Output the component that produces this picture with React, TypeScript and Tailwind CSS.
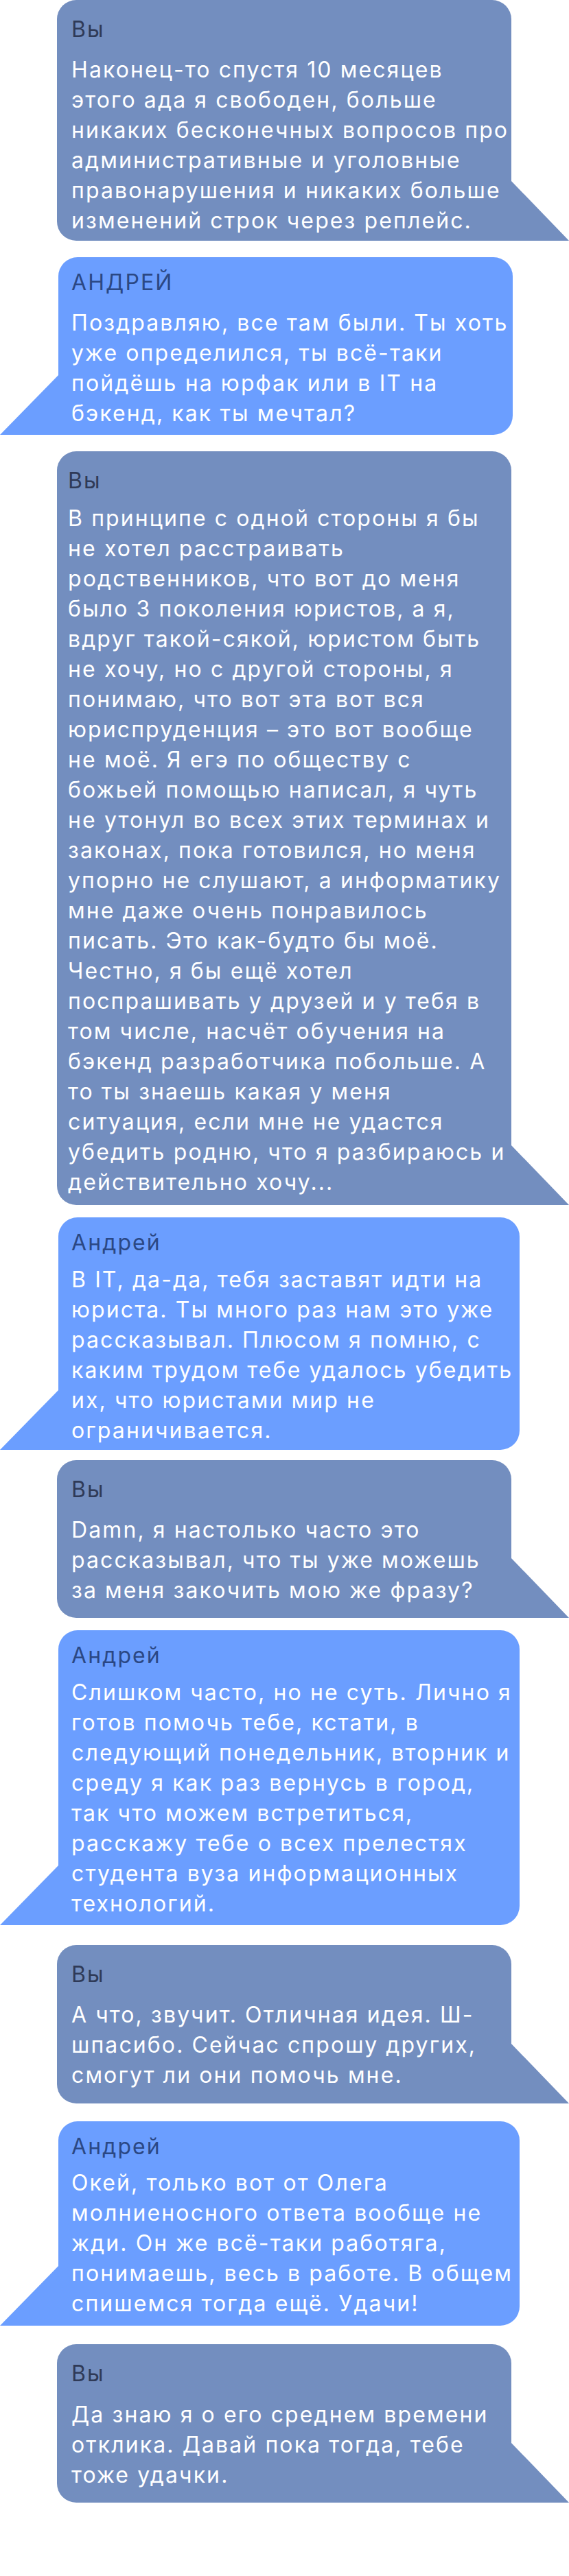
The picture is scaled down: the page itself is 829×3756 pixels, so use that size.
import React from 'react';

type Author = 'me' | 'friend';

interface Message {
  author: Author;
  name: string;
  text: string;
  // vertical tuning per bubble, taken from the mock
  mt: string;
  gap: string;
  pb: string;
  w: string;
  px?: string;
}

const messages: Message[] = [
  {
    author: 'me',
    name: 'Вы',
    text: 'Наконец-то спустя 10 месяцев этого ада я свободен, больше никаких бесконечных вопросов про административные и уголовные правонарушения и никаких больше изменений строк через реплейс.',
    mt: 'mt-0',
    gap: 'mt-[15px]',
    pb: 'pb-[7px]',
    w: 'w-[662px]',
  },
  {
    author: 'friend',
    name: 'АНДРЕЙ',
    text: 'Поздравляю, все там были. Ты хоть уже определился, ты всё-таки пойдёшь на юрфак или в IT на бэкенд, как ты мечтал?',
    mt: 'mt-[24px]',
    gap: 'mt-[15px]',
    pb: 'pb-[9px]',
    w: 'w-[662px]',
  },
  {
    author: 'me',
    name: 'Вы',
    text: 'В принципе с одной стороны я бы не хотел расстраивать родственников, что вот до меня было 3 поколения юристов, а я, вдруг такой-сякой, юристом быть не хочу, но с другой стороны, я понимаю, что вот эта вот вся юриспруденция – это вот вообще не моё. Я егэ по обществу с божьей помощью написал, я чуть не утонул во всех этих терминах и законах, пока готовился, но меня упорно не слушают, а информатику мне даже очень понравилось писать. Это как-будто бы моё. Честно, я бы ещё хотел поспрашивать у друзей и у тебя в том числе, насчёт обучения на бэкенд разработчика побольше. А то ты знаешь какая у меня ситуация, если мне не удастся убедить родню, что я разбираюсь и действительно хочу...',
    mt: 'mt-[24px]',
    gap: 'mt-[11px]',
    pb: 'pb-[11px]',
    w: 'w-[662px]',
    px: 'pl-[16px] pr-[5px]',
  },
  {
    author: 'friend',
    name: 'Андрей',
    text: 'В IT, да-да, тебя заставят идти на юриста. Ты много раз нам это уже рассказывал. Плюсом я помню, с каким трудом тебе удалось убедить их, что юристами мир не ограничивается.',
    mt: 'mt-[18px]',
    gap: 'mt-[10px]',
    pb: 'pb-[6px]',
    w: 'w-[672px]',
  },
  {
    author: 'me',
    name: 'Вы',
    text: 'Damn, я настолько часто это рассказывал, что ты уже можешь за меня закочить мою же фразу?',
    mt: 'mt-[15px]',
    gap: 'mt-[15px]',
    pb: 'pb-[18px]',
    w: 'w-[662px]',
  },
  {
    author: 'friend',
    name: 'Андрей',
    text: 'Слишком часто, но не суть. Лично я готов помочь тебе, кстати, в следующий понедельник, вторник и среду я как раз вернусь в город, так что можем встретиться, расскажу тебе о всех прелестях студента вуза информационных технологий.',
    mt: 'mt-[18px]',
    gap: 'mt-[10px]',
    pb: 'pb-[9px]',
    w: 'w-[672px]',
  },
  {
    author: 'me',
    name: 'Вы',
    text: 'А что, звучит. Отличная идея. Ш-шпасибо. Сейчас спрошу других, смогут ли они помочь мне.',
    mt: 'mt-[29px]',
    gap: 'mt-[15px]',
    pb: 'pb-[19px]',
    w: 'w-[662px]',
  },
  {
    author: 'friend',
    name: 'Андрей',
    text: 'Окей, только вот от Олега молниеносного ответа вообще не жди. Он же всё-таки работяга, понимаешь, весь в работе. В общем спишемся тогда ещё. Удачи!',
    mt: 'mt-[26px]',
    gap: 'mt-[9px]',
    pb: 'pb-[10px]',
    w: 'w-[672px]',
  },
  {
    author: 'me',
    name: 'Вы',
    text: 'Да знаю я о его среднем времени отклика. Давай пока тогда, тебе тоже удачки.',
    mt: 'mt-[27px]',
    gap: 'mt-[16px]',
    pb: 'pb-[18px]',
    w: 'w-[662px]',
  },
];

const Bubble: React.FC<{ msg: Message }> = ({ msg }) => {
  const isMe = msg.author === 'me';
  const px = msg.px ?? (isMe ? 'pl-[21px]' : 'pl-[19px]');

  return (
    <div
      className={`relative ${msg.mt} ${msg.w} ${msg.pb} ${px} ${
        isMe
          ? 'ml-[83px] bg-[#738ebf] rounded-[28px] rounded-br-none pt-[21px]'
          : 'ml-[85px] bg-[#6b9eff] rounded-[28px] rounded-bl-none pt-[15px]'
      }`}
    >
      <div className={isMe ? 'text-[#2f3a57]' : 'text-[#2b4884]'}>{msg.name}</div>
      <p className={`${msg.gap} text-white`}>{msg.text}</p>

      {/* bubble tail */}
      {isMe ? (
        <svg className="absolute bottom-0 left-full" width="84" height="87" viewBox="0 0 84 87">
          <polygon points="0,0 84,87 0,87" fill="#738ebf" />
        </svg>
      ) : (
        <svg className="absolute bottom-0 right-full" width="85" height="87" viewBox="0 0 85 87">
          <polygon points="85,0 0,87 85,87" fill="#6b9eff" />
        </svg>
      )}
    </div>
  );
};

const App: React.FC = () => {
  return (
    <div className="min-h-screen w-full bg-white font-['Inter',sans-serif] text-[32px] leading-[44px] tracking-[2.1px]">
      {messages.map((m, i) => (
        <Bubble key={i} msg={m} />
      ))}
    </div>
  );
};

export default App;
